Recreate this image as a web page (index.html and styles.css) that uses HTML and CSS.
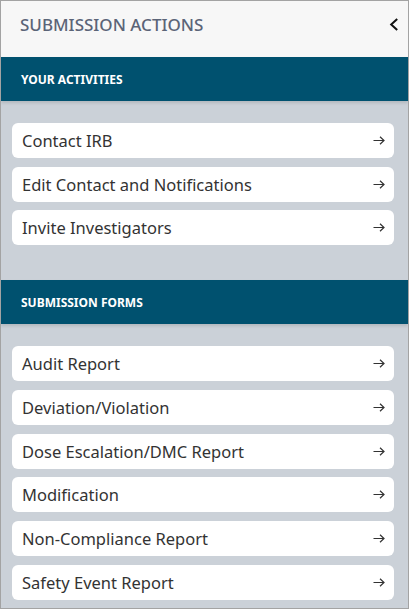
FILE: index.html
```html
<!DOCTYPE html>
<html lang="en">
<head>
<meta charset="utf-8">
<title>Submission Actions</title>
<link rel="stylesheet" href="styles.css">
</head>
<body>
<aside class="panel">
  <header class="panel-header">
    <h1 class="panel-title">SUBMISSION ACTIONS</h1>
    <button class="collapse" aria-label="Collapse">
      <svg width="10" height="13" viewBox="0 0 10 13"><path d="M8.2 1 L2.2 6.5 L8.2 12" fill="none" stroke="#111" stroke-width="2"/></svg>
    </button>
  </header>

  <section class="group">
    <h2 class="group-title">YOUR ACTIVITIES</h2>
    <ul class="list">
      <li class="item"><span>Contact IRB</span><svg class="arrow" width="12" height="9" viewBox="0 0 12 9"><path d="M0.5 4.5 H11 M7 0.8 L11 4.5 L7 8.2" fill="none" stroke="#333" stroke-width="1.2"/></svg></li>
      <li class="item"><span>Edit Contact and Notifications</span><svg class="arrow" width="12" height="9" viewBox="0 0 12 9"><path d="M0.5 4.5 H11 M7 0.8 L11 4.5 L7 8.2" fill="none" stroke="#333" stroke-width="1.2"/></svg></li>
      <li class="item"><span>Invite Investigators</span><svg class="arrow" width="12" height="9" viewBox="0 0 12 9"><path d="M0.5 4.5 H11 M7 0.8 L11 4.5 L7 8.2" fill="none" stroke="#333" stroke-width="1.2"/></svg></li>
    </ul>
  </section>

  <section class="group">
    <h2 class="group-title">SUBMISSION FORMS</h2>
    <ul class="list">
      <li class="item"><span>Audit Report</span><svg class="arrow" width="12" height="9" viewBox="0 0 12 9"><path d="M0.5 4.5 H11 M7 0.8 L11 4.5 L7 8.2" fill="none" stroke="#333" stroke-width="1.2"/></svg></li>
      <li class="item"><span>Deviation/Violation</span><svg class="arrow" width="12" height="9" viewBox="0 0 12 9"><path d="M0.5 4.5 H11 M7 0.8 L11 4.5 L7 8.2" fill="none" stroke="#333" stroke-width="1.2"/></svg></li>
      <li class="item"><span>Dose Escalation/DMC Report</span><svg class="arrow" width="12" height="9" viewBox="0 0 12 9"><path d="M0.5 4.5 H11 M7 0.8 L11 4.5 L7 8.2" fill="none" stroke="#333" stroke-width="1.2"/></svg></li>
      <li class="item"><span>Modification</span><svg class="arrow" width="12" height="9" viewBox="0 0 12 9"><path d="M0.5 4.5 H11 M7 0.8 L11 4.5 L7 8.2" fill="none" stroke="#333" stroke-width="1.2"/></svg></li>
      <li class="item"><span>Non-Compliance Report</span><svg class="arrow" width="12" height="9" viewBox="0 0 12 9"><path d="M0.5 4.5 H11 M7 0.8 L11 4.5 L7 8.2" fill="none" stroke="#333" stroke-width="1.2"/></svg></li>
      <li class="item"><span>Safety Event Report</span><svg class="arrow" width="12" height="9" viewBox="0 0 12 9"><path d="M0.5 4.5 H11 M7 0.8 L11 4.5 L7 8.2" fill="none" stroke="#333" stroke-width="1.2"/></svg></li>
    </ul>
  </section>
</aside>
</body>
</html>
```

FILE: styles.css
```css
* { box-sizing: border-box; }
html, body { margin: 0; padding: 0; }
body { font-family: "Noto Sans", "Open Sans", sans-serif; }

.panel {
  width: 409px;
  height: 609px;
  border: 1px solid #a3a3a3;
  background: #cbd1d8;
  overflow: hidden;
}

.panel-header {
  height: 56px;
  background: #f7f7f7;
  display: flex;
  align-items: center;
  justify-content: space-between;
  padding: 0 9px 9px 19px;
}

.panel-title {
  margin: 0;
  font-size: 17px;
  font-weight: 500;
  color: #5b6477;
}

.collapse {
  border: 0;
  background: none;
  padding: 0;
  display: flex;
}

.group-title {
  margin: 0;
  height: 44px;
  background: #00516f;
  color: #fff;
  font-size: 12px;
  font-weight: 700;
  display: flex;
  align-items: center;
  padding-left: 20px;
  box-shadow: 0 2px 3px rgba(0,0,0,0.12);
}

.group + .group { margin-top: 35px; }

.list {
  list-style: none;
  margin: 0;
  padding: 22px 14px 0 11px;
  display: flex;
  flex-direction: column;
  gap: 8.7px;
}

.item {
  height: 35px;
  background: #fff;
  border-radius: 6px;
  display: flex;
  align-items: center;
  justify-content: space-between;
  padding: 0 9px 0 10px;
  font-size: 16.5px;
  color: #333;
}

.arrow { flex: none; }
```
